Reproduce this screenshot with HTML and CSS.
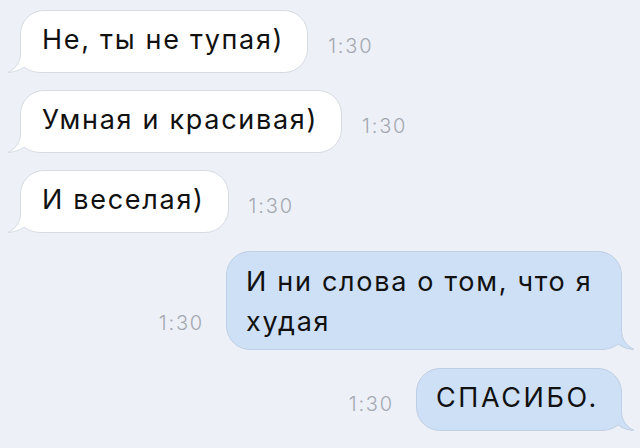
FILE: index.html
```html
<!DOCTYPE html>
<html lang="ru">
<head>
    <meta charset="UTF-8">
    <title>Чат</title>
    <link rel="stylesheet" href="styles.css">
</head>
<body>
    <div class="chat">
        <div class="row in">
            <div class="bubble">Не, ты не тупая)<svg class="tail" width="34" height="30" viewBox="0 0 34 30"><path class="fill" d="M12.5,0 L12.5,10 C12.5,20 7,26 0,29.5 C7,29 12,27 16,24 C21,28 27,29.5 34,29.5 L34,0 Z"/><path class="line" d="M12.5,0 L12.5,10 C12.5,20 7,26 0,29.5 C7,29 12,27 16,24 C21,28 27,29.5 34,29.5"/></svg></div>
            <span class="time">1:30</span>
        </div>
        <div class="row in">
            <div class="bubble">Умная и красивая)<svg class="tail" width="34" height="30" viewBox="0 0 34 30"><path class="fill" d="M12.5,0 L12.5,10 C12.5,20 7,26 0,29.5 C7,29 12,27 16,24 C21,28 27,29.5 34,29.5 L34,0 Z"/><path class="line" d="M12.5,0 L12.5,10 C12.5,20 7,26 0,29.5 C7,29 12,27 16,24 C21,28 27,29.5 34,29.5"/></svg></div>
            <span class="time">1:30</span>
        </div>
        <div class="row in">
            <div class="bubble">И веселая)<svg class="tail" width="34" height="30" viewBox="0 0 34 30"><path class="fill" d="M12.5,0 L12.5,10 C12.5,20 7,26 0,29.5 C7,29 12,27 16,24 C21,28 27,29.5 34,29.5 L34,0 Z"/><path class="line" d="M12.5,0 L12.5,10 C12.5,20 7,26 0,29.5 C7,29 12,27 16,24 C21,28 27,29.5 34,29.5"/></svg></div>
            <span class="time">1:30</span>
        </div>
        <div class="row out">
            <span class="time">1:30</span>
            <div class="bubble wide">И ни слова о том, что я худая<svg class="tail" width="34" height="30" viewBox="0 0 34 30"><path class="fill" d="M12.5,0 L12.5,10 C12.5,20 7,26 0,29.5 C7,29 12,27 16,24 C21,28 27,29.5 34,29.5 L34,0 Z"/><path class="line" d="M12.5,0 L12.5,10 C12.5,20 7,26 0,29.5 C7,29 12,27 16,24 C21,28 27,29.5 34,29.5"/></svg></div>
        </div>
        <div class="row out">
            <span class="time">1:30</span>
            <div class="bubble caps">СПАСИБО.<svg class="tail" width="34" height="30" viewBox="0 0 34 30"><path class="fill" d="M12.5,0 L12.5,10 C12.5,20 7,26 0,29.5 C7,29 12,27 16,24 C21,28 27,29.5 34,29.5 L34,0 Z"/><path class="line" d="M12.5,0 L12.5,10 C12.5,20 7,26 0,29.5 C7,29 12,27 16,24 C21,28 27,29.5 34,29.5"/></svg></div>
        </div>
    </div>
</body>
</html>
```
FILE: styles.css
```css
body {
    margin: 0;
    background-color: #edf1f7;
    font-family: Inter, "Liberation Sans", Arial, sans-serif;
    color: #111;
}
.chat {
    display: flex;
    flex-direction: column;
    gap: 17px;
    padding-top: 10px;
}
.row {
    display: flex;
    align-items: flex-end;
    gap: 20px;
}
.row.in {
    padding-left: 20px;
}
.row.out {
    justify-content: flex-end;
    padding-right: 18px;
    margin-top: 1px;
    gap: 22px;
}
.bubble {
    position: relative;
    font-size: 27px;
    letter-spacing: 1.7px;
    line-height: 40px;
    padding: 9px 23px 12px 21px;
    border-radius: 24px;
    background-color: #fff;
    border: 1px solid #d6dbe3;
}
.out .bubble {
    background-color: #cee0f6;
    border-color: #bfcfe4;
    padding: 9px 20px 12px 19px;
}
.out .bubble.wide {
    width: 396px;
    box-sizing: border-box;
    padding: 10px 20px 7px 19px;
}
.out .bubble.caps {
    letter-spacing: 2.6px;
    padding-right: 22px;
}
.time {
    font-weight: 300;
    font-size: 20px;
    line-height: 20px;
    letter-spacing: 1.8px;
    color: #a3a8b0;
    margin-bottom: 17px;
}
.tail {
    position: absolute;
    left: -13px;
    bottom: -1px;
    overflow: visible;
}
.out .tail {
    left: auto;
    right: -13px;
    transform: scaleX(-1);
}
.tail .fill {
    fill: #fff;
}
.tail .line {
    fill: none;
    stroke: #d6dbe3;
    stroke-width: 1;
}
.out .tail .fill {
    fill: #cee0f6;
}
.out .tail .line {
    stroke: #bfcfe4;
}
```
